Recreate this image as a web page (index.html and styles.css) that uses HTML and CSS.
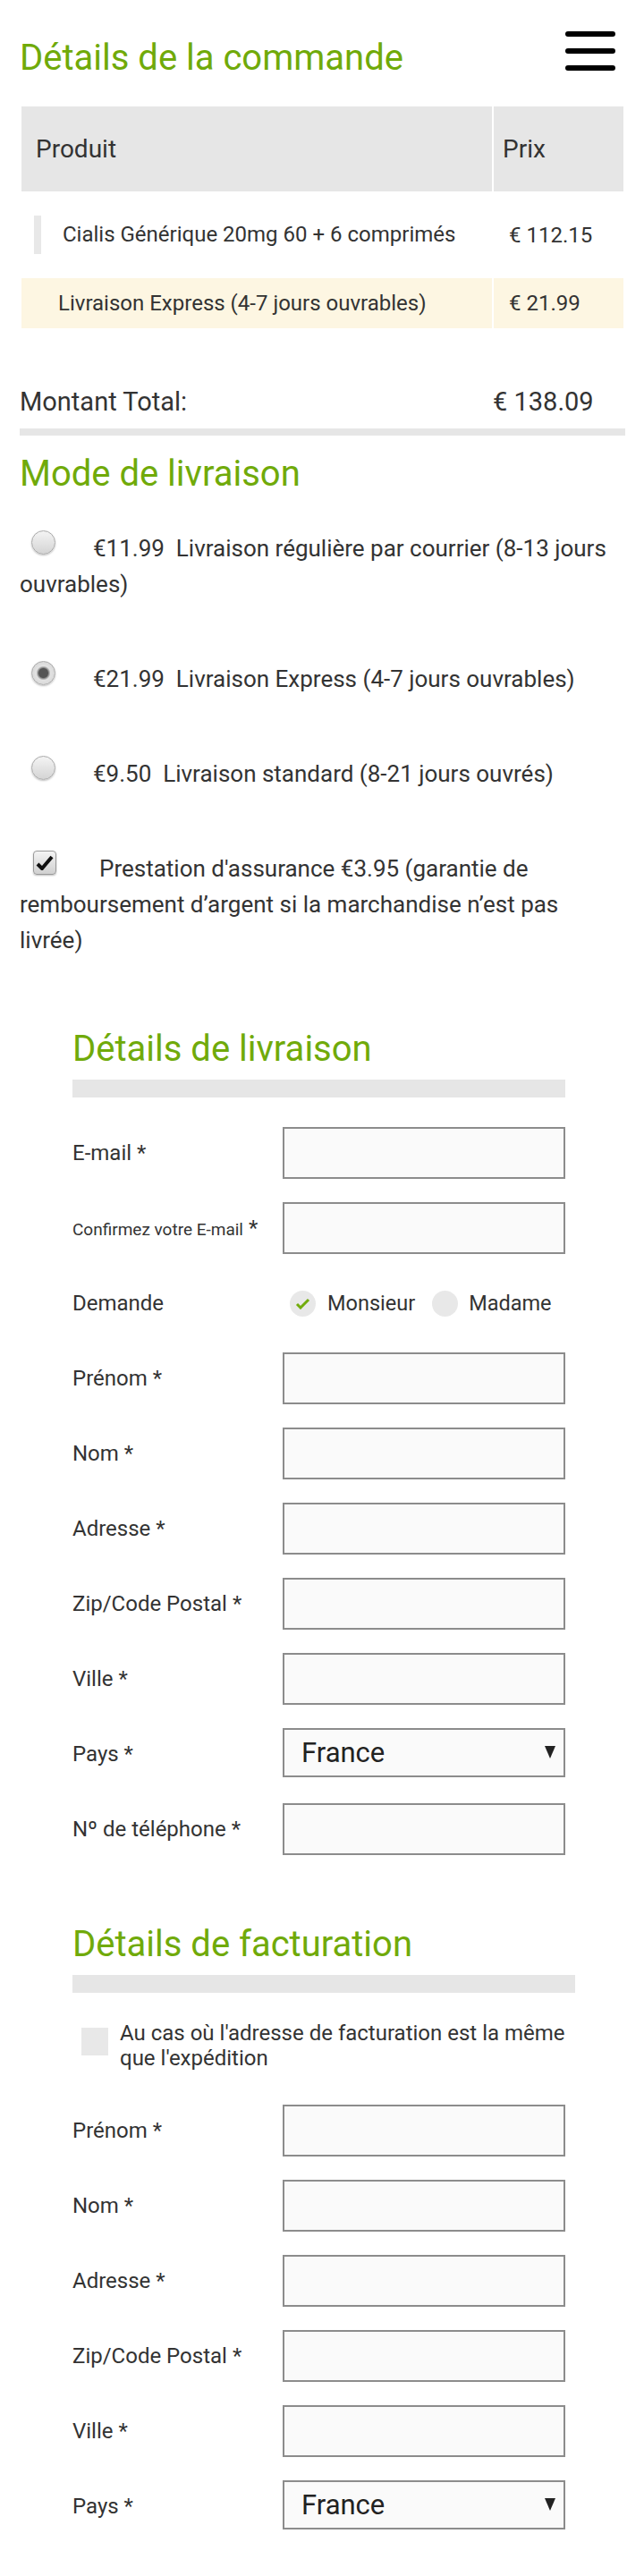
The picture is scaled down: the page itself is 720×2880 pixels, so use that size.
FILE: index.html
```html
<!DOCTYPE html>
<html lang="fr">
<head>
    <meta charset="UTF-8">
    <meta name="viewport" content="width=device-width, initial-scale=1.0">
    <title>Détails de la commande</title>
    <link rel="stylesheet" href="styles.css">
</head>
<body>
<div class="page">
    <div class="top">
        <h1 class="title">Détails de la commande</h1>
        <div class="burger"><span></span><span></span><span></span></div>
    </div>

    <table class="order">
        <tr class="head">
            <th>Produit</th>
            <th class="price">Prix</th>
        </tr>
        <tr class="product">
            <td><div class="item">Cialis Générique 20mg 60 + 6 comprimés</div></td>
            <td class="price">€ 112.15</td>
        </tr>
        <tr class="shipping">
            <td class="ship-name">Livraison Express (4-7 jours ouvrables)</td>
            <td class="price">€ 21.99</td>
        </tr>
    </table>

    <div class="total">
        <span class="total-label">Montant Total:</span>
        <span class="total-price">€ 138.09</span>
    </div>
    <div class="bar"></div>

    <h2 class="title">Mode de livraison</h2>
    <p class="option first"><span class="radio"></span>€11.99&nbsp; Livraison régulière par courrier (8-13 jours ouvrables)</p>
    <p class="option"><span class="radio on"></span>€21.99&nbsp; Livraison Express (4-7 jours ouvrables)</p>
    <p class="option"><span class="radio"></span>€9.50&nbsp; Livraison standard (8-21 jours ouvrés)</p>
    <p class="option"><span class="check"><svg width="20" height="18" viewBox="0 0 20 18"><path d="M2 10 L7 15 L18 2" fill="none" stroke="#111" stroke-width="4" stroke-linejoin="round"/></svg></span>Prestation d'assurance €3.95 (garantie de remboursement d’argent si la marchandise n’est pas livrée)</p>

    <div class="form">
        <h2 class="title sub">Détails de livraison</h2>
        <div class="bar thick"></div>

        <div class="row first">
            <label class="lbl">E-mail *</label>
            <input class="field" type="text">
        </div>
        <div class="row">
            <label class="lbl"><span class="small">Confirmez votre E-mail</span> *</label>
            <input class="field" type="text">
        </div>
        <div class="row">
            <label class="lbl">Demande</label>
            <div class="choices">
                <span class="dot"><svg width="17" height="13" viewBox="0 0 17 13"><path d="M2 7 L6 11 L15 2" fill="none" stroke="#72ac0c" stroke-width="3"/></svg></span>
                <span>Monsieur</span>
                <span class="dot second"></span>
                <span>Madame</span>
            </div>
        </div>
        <div class="row">
            <label class="lbl">Prénom *</label>
            <input class="field" type="text">
        </div>
        <div class="row">
            <label class="lbl">Nom *</label>
            <input class="field" type="text">
        </div>
        <div class="row">
            <label class="lbl">Adresse *</label>
            <input class="field" type="text">
        </div>
        <div class="row">
            <label class="lbl">Zip/Code Postal *</label>
            <input class="field" type="text">
        </div>
        <div class="row">
            <label class="lbl">Ville *</label>
            <input class="field" type="text">
        </div>
        <div class="row">
            <label class="lbl">Pays *</label>
            <div class="select">
                <select><option>France</option></select>
            </div>
        </div>
        <div class="row">
            <label class="lbl">Nº de téléphone *</label>
            <input class="field" type="text">
        </div>

        <h2 class="title sub billing">Détails de facturation</h2>
        <div class="bar thick wide"></div>

        <div class="same">
            <span class="box"></span>
            <span>Au cas où l'adresse de facturation est la même que l'expédition</span>
        </div>

        <div class="row after-same">
            <label class="lbl">Prénom *</label>
            <input class="field" type="text">
        </div>
        <div class="row">
            <label class="lbl">Nom *</label>
            <input class="field" type="text">
        </div>
        <div class="row">
            <label class="lbl">Adresse *</label>
            <input class="field" type="text">
        </div>
        <div class="row">
            <label class="lbl">Zip/Code Postal *</label>
            <input class="field" type="text">
        </div>
        <div class="row">
            <label class="lbl">Ville *</label>
            <input class="field" type="text">
        </div>
        <div class="row">
            <label class="lbl">Pays *</label>
            <div class="select">
                <select><option>France</option></select>
            </div>
        </div>
    </div>
</div>
</body>
</html>
```

FILE: styles.css
```css
* {
    box-sizing: border-box;
}
body {
    margin: 0;
    background: #fff;
    color: #333;
    font-family: Roboto, "Liberation Sans", sans-serif;
}
.page {
    padding: 0 21px 60px 22px;
}
.top {
    display: flex;
    justify-content: space-between;
    align-items: flex-start;
}
.title {
    margin: 0;
    color: #70aa0a;
    font-size: 40px;
    font-weight: 400;
    line-height: 48px;
}
.top .title {
    margin-top: 41px;
}
.burger {
    display: flex;
    flex-direction: column;
    gap: 13px;
    width: 56px;
    margin: 35px 11px 0 0;
}
.burger span {
    height: 6px;
    background: #000;
    border-radius: 3px;
}

/* tableau commande */
.order {
    width: 100%;
    margin-top: 28px;
    border-spacing: 2px;
    font-size: 24px;
}
.order th {
    height: 95px;
    padding-left: 16px;
    background: #e6e6e6;
    font-size: 28px;
    font-weight: 400;
    text-align: left;
}
.order th.price {
    width: 145px;
    padding-left: 10px;
}
.order td {
    padding: 0;
}
.order td.price {
    padding-left: 17px;
}
.product td {
    height: 93px;
}
.product td:first-child {
    padding-left: 14px;
}
.item {
    border-left: 8px solid #e8e8e8;
    padding-left: 24px;
    line-height: 43px;
}
.shipping td {
    height: 56px;
    background: #fdf6e2;
}
.shipping .ship-name {
    padding-left: 41px;
}

.total {
    display: flex;
    margin-top: 60px;
    font-size: 29px;
    line-height: 40px;
}
.total-label {
    flex: 1;
}
.total-price {
    width: 148px;
}
.bar {
    height: 8px;
    margin-top: 10px;
    background: #e6e6e6;
}

/* mode de livraison */
h2.title {
    margin-top: 19px;
}
.option {
    margin: 66px 0 0;
    font-size: 26px;
    line-height: 40px;
}
.option.first {
    margin-top: 39px;
}
.radio {
    display: inline-block;
    width: 27px;
    height: 27px;
    margin: 0 42px 0 13px;
    vertical-align: top;
    border: 1px solid #aaa;
    border-radius: 50%;
    background: linear-gradient(#f4f4f4, #d4d4d4);
    box-shadow: 0 1px 2px rgba(0, 0, 0, 0.25);
}
.radio.on {
    background: radial-gradient(circle, #555 0 5px, #8a8a8a 6px, #e2e2e2 8px, #cfcfcf 100%);
}
.check {
    display: inline-flex;
    align-items: center;
    justify-content: center;
    width: 26px;
    height: 27px;
    margin: 0 48px 0 15px;
    vertical-align: top;
    border: 1px solid #9a9a9a;
    border-radius: 4px;
    background: linear-gradient(#f4f4f4, #d0d0d0);
    box-shadow: 0 1px 2px rgba(0, 0, 0, 0.25);
}

/* formulaires */
.form {
    width: 551px;
    margin-left: 59px;
}
h2.sub {
    margin-top: 78px;
}
h2.sub.billing {
    margin-top: 76px;
}
.bar.thick {
    height: 20px;
}
.bar.wide {
    margin-right: -11px;
}
.row {
    display: flex;
    align-items: center;
    height: 58px;
    margin-top: 26px;
}
.row.first {
    margin-top: 33px;
}
.row.after-same {
    margin-top: 38px;
}
.lbl {
    width: 235px;
    font-size: 24px;
}
.lbl .small {
    font-size: 19px;
}
.field {
    width: 316px;
    height: 58px;
    border: 2px solid #8c8c8c;
    background: #fafafa;
}
.choices {
    display: flex;
    align-items: center;
    font-size: 23.5px;
}
.dot {
    display: flex;
    align-items: center;
    justify-content: center;
    width: 29px;
    height: 29px;
    margin: 0 13px 0 8px;
    border-radius: 50%;
    background: #e8e8e8;
}
.dot.second {
    margin: 0 12px 0 19px;
}
.select {
    position: relative;
    width: 316px;
    height: 55px;
    align-self: flex-start;
}
.select select {
    width: 100%;
    height: 100%;
    padding-left: 19px;
    -webkit-appearance: none;
    appearance: none;
    border: 2px solid #8c8c8c;
    border-radius: 0;
    background: #fafafa;
    color: #222;
    font-family: Roboto, "Liberation Sans", sans-serif;
    font-size: 31px;
}
.select::after {
    content: "";
    position: absolute;
    top: 20px;
    right: 11px;
    border-left: 6px solid transparent;
    border-right: 6px solid transparent;
    border-top: 14px solid #222;
    pointer-events: none;
}
.same {
    display: flex;
    align-items: flex-start;
    margin: 31px -11px 0 0;
    font-size: 24px;
    line-height: 28px;
}
.box {
    flex-shrink: 0;
    width: 30px;
    height: 31px;
    margin: 8px 13px 0 10px;
    background: #e8e8e8;
}
```
